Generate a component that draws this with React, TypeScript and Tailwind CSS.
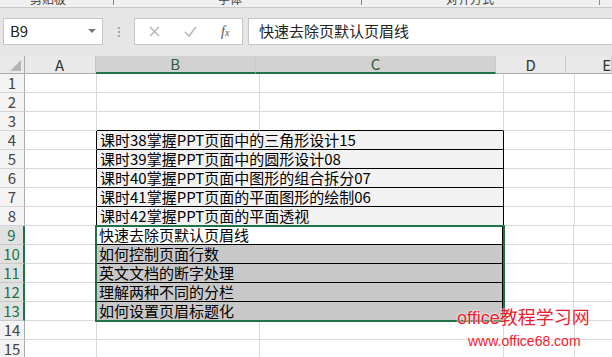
import React from "react";

const FONT = '"Noto Sans CJK SC", "Noto Sans", sans-serif';

type Row = {
  n: number;
  text?: string;
  fill?: string;
  merged?: boolean;
};

const rows: Row[] = [
  { n: 1 },
  { n: 2 },
  { n: 3 },
  { n: 4, text: "课时38掌握PPT页面中的三角形设计15", fill: "#f2f2f2", merged: true },
  { n: 5, text: "课时39掌握PPT页面中的圆形设计08", fill: "#f2f2f2", merged: true },
  { n: 6, text: "课时40掌握PPT页面中图形的组合拆分07", fill: "#f2f2f2", merged: true },
  { n: 7, text: "课时41掌握PPT页面的平面图形的绘制06", fill: "#f2f2f2", merged: true },
  { n: 8, text: "课时42掌握PPT页面的平面透视", fill: "#f2f2f2", merged: true },
  { n: 9, text: "快速去除页默认页眉线", fill: "#ffffff", merged: true },
  { n: 10, text: "如何控制页面行数", fill: "#c8c8c8", merged: true },
  { n: 11, text: "英文文档的断字处理", fill: "#c8c8c8", merged: true },
  { n: 12, text: "理解两种不同的分栏", fill: "#c8c8c8", merged: true },
  { n: 13, text: "如何设置页眉标题化", fill: "#c8c8c8", merged: true },
  { n: 14 },
  { n: 15 },
];

function RibbonStrip() {
  return (
    <div className="relative h-[8px] overflow-hidden border-b border-[#c8c8c8] bg-[#f0f0f0]">
      <div className="flex items-start text-[12px] leading-[12px] text-[#444] mt-[-7px]" style={{ fontFamily: FONT }}>
        <span className="ml-[30px] w-[70px]">剪贴板</span>
        <span className="w-[14px] h-[12px] border-r border-[#888]"></span>
        <span className="ml-[104px] w-[130px]">字体</span>
        <span className="w-[14px] h-[12px] border-r border-[#888]"></span>
        <span className="ml-[84px] w-[140px]">对齐方式</span>
        <span className="w-[14px] h-[12px] border-r border-[#888]"></span>
      </div>
    </div>
  );
}

function FormulaBar() {
  return (
    <div className="h-[48px] bg-[#e6e6e6] flex items-start pt-[10px]" style={{ fontFamily: FONT }}>
      <div className="ml-[3px] w-[100px] h-[27px] bg-white border border-[#c6c6c6] flex items-center justify-between pl-[6px] pr-[6px]">
        <span className="text-[15px] text-[#222]">B9</span>
        <svg width="8" height="5" viewBox="0 0 8 5">
          <path d="M0 0 L8 0 L4 4 Z" fill="#7a7a7a" />
        </svg>
      </div>
      <div className="w-[31px] h-[27px] flex flex-col items-center justify-center gap-[2px]">
        <span className="w-[2px] h-[2px] bg-[#a8a8a8]"></span>
        <span className="w-[2px] h-[2px] bg-[#a8a8a8]"></span>
        <span className="w-[2px] h-[2px] bg-[#a8a8a8]"></span>
      </div>
      <div className="w-[109px] h-[27px] bg-white border border-[#c6c6c6] flex items-center">
        <svg className="ml-[14px]" width="11" height="11" viewBox="0 0 11 11">
          <path d="M1 1 L10 10 M10 1 L1 10" stroke="#b8b8b8" strokeWidth="1.5" />
        </svg>
        <svg className="ml-[24px]" width="13" height="11" viewBox="0 0 13 11">
          <path d="M1 6 L5 10 L12 1" stroke="#b8b8b8" strokeWidth="1.6" fill="none" />
        </svg>
        <span
          className="ml-[24px] text-[14px] italic text-[#555]"
          style={{ fontFamily: '"Liberation Serif", serif' }}
        >
          f<span className="text-[10px]">x</span>
        </span>
      </div>
      <div className="ml-[5px] flex-1 h-[27px] bg-white border-y border-l border-[#c6c6c6] flex items-center pl-[10px]">
        <span className="text-[15px] text-[#222]">快速去除页默认页眉线</span>
      </div>
    </div>
  );
}

function HeaderRow() {
  const cell = "h-[18px] flex items-center justify-center border-r text-[15px] leading-[18px]";
  return (
    <div className="flex h-[18px]" style={{ fontFamily: FONT }}>
      <div className="w-[25px] h-[18px] bg-[#e9e9e9] border-r border-b border-[#ababab] relative flex items-end justify-end pr-[3px] pb-[2px]">
        <svg width="11" height="11" viewBox="0 0 11 11">
          <path d="M11 0 L11 11 L0 11 Z" fill="#b4b4b4" />
        </svg>
      </div>
      <div className={`${cell} w-[72px] bg-[#e9e9e9] border-[#c8c8c8] border-b border-b-[#ababab] text-[#333]`}>A</div>
      <div className={`${cell} w-[163px] bg-[#d2d2d2] border-[#c8c8c8] border-b-2 border-b-[#217346] text-[#2b5f40]`}>B</div>
      <div className={`${cell} w-[244px] bg-[#d2d2d2] border-[#c8c8c8] border-b-2 border-b-[#217346] text-[#2b5f40]`}>C</div>
      <div className={`${cell} w-[71px] bg-[#e9e9e9] border-[#c8c8c8] border-b border-b-[#ababab] text-[#333]`}>D</div>
      <div className={`${cell} flex-1 bg-[#e9e9e9] border-[#c8c8c8] border-b border-b-[#ababab] text-[#333] justify-start pl-[36px]`}>E</div>
    </div>
  );
}

function DataRow({ r }: { r: Row }) {
  const sel = r.n >= 9 && r.n <= 13;
  const boxed = r.n >= 4 && r.n <= 13;
  return (
    <div className="flex h-[19px]" style={{ fontFamily: FONT }}>
      <div
        className={`w-[25px] h-[19px] flex items-center justify-center text-[15px] leading-[18px] border-b ${
          sel
            ? "bg-[#e1e1e1] text-[#217346] border-r-2 border-r-[#217346] border-b-[#c8c8c8]"
            : "bg-[#f3f3f3] text-[#444] border-r border-r-[#ababab] border-b-[#d4d4d4]"
        }`}
      >
        {r.n}
      </div>
      <div
        className={`h-[19px] border-b border-r ${sel ? "w-[71px]" : "w-[72px]"} ${
          boxed ? "border-r-black" : "border-r-[#d9d9d9]"
        } border-b-[#d9d9d9] bg-white`}
      ></div>
      {r.merged ? (
        <div
          className="w-[407px] h-[19px] border-b border-r border-black flex items-center pl-[3px] text-[15px] leading-[18px] text-black whitespace-nowrap overflow-hidden"
          style={{ backgroundColor: r.fill }}
        >
          {r.text}
        </div>
      ) : (
        <>
          <div
            className={`w-[163px] h-[19px] border-r border-r-[#d9d9d9] border-b ${
              r.n === 3 ? "border-b-black" : "border-b-[#d9d9d9]"
            } bg-white`}
          ></div>
          <div
            className={`w-[244px] h-[19px] border-r border-r-[#d9d9d9] border-b ${
              r.n === 3 ? "border-b-black" : "border-b-[#d9d9d9]"
            } bg-white`}
          ></div>
        </>
      )}
      <div className="w-[71px] h-[19px] border-r border-b border-[#d9d9d9] bg-white"></div>
      <div className="flex-1 h-[19px] border-b border-[#d9d9d9] bg-white"></div>
    </div>
  );
}

export default function App() {
  return (
    <div className="relative w-[612px] h-[357px] overflow-hidden bg-white">
      <RibbonStrip />
      <FormulaBar />
      <HeaderRow />
      {rows.map((r) => (
        <DataRow key={r.n} r={r} />
      ))}

      {/* selection outline over B9:C13 */}
      <div className="absolute left-[95px] top-[225px] w-[410px] h-[97px] border-2 border-[#217346] pointer-events-none"></div>

      {/* watermark */}
      <div
        className="absolute left-[457px] top-[307px] text-[18px] leading-[22px] text-[#ee1c2e] whitespace-nowrap"
        style={{ fontFamily: '"Liberation Sans", "Noto Sans CJK SC", sans-serif', textShadow: "0 0 2px #fff, 0 0 2px #fff" }}
      >
        office教程学习网
      </div>
      <div
        className="absolute left-[468px] top-[333px] text-[14px] leading-[16px] text-[#ee1c2e] whitespace-nowrap"
        style={{ fontFamily: '"Liberation Sans", sans-serif', textShadow: "0 0 2px #fff" }}
      >
        www.office68.com
      </div>
    </div>
  );
}
